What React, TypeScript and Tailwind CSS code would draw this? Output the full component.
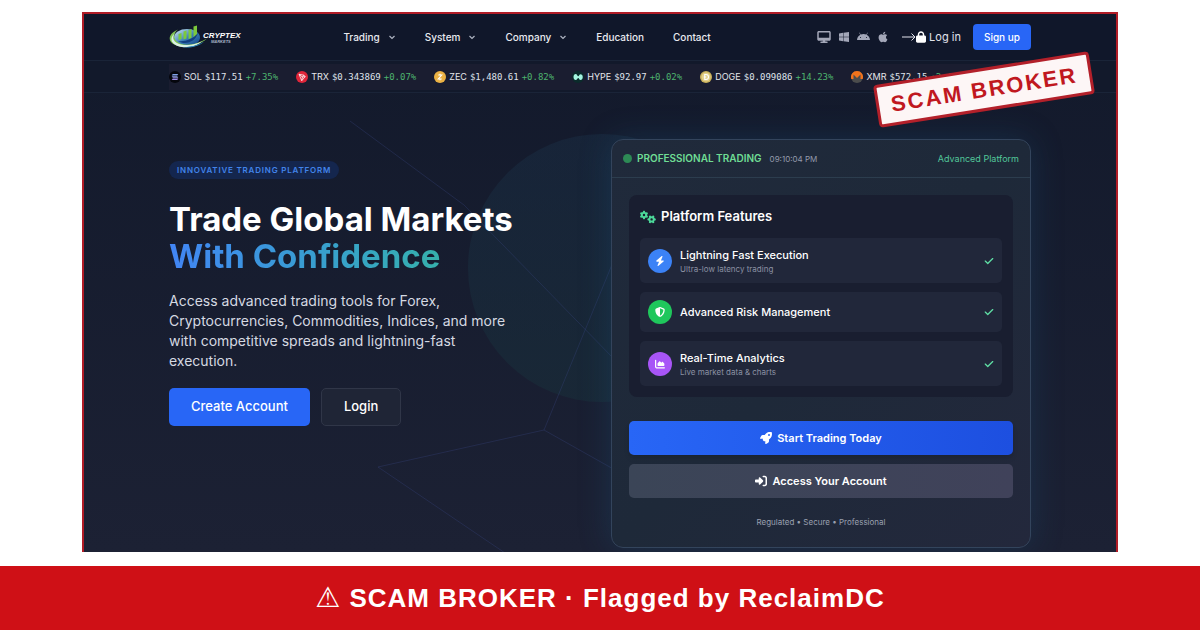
import type { ReactNode } from "react";
import {
	FaAndroid,
	FaApple,
	FaBolt,
	FaChartArea,
	FaCheck,
	FaDesktop,
	FaGears,
	FaLock,
	FaRightToBracket,
	FaRocket,
	FaShieldHalved,
	FaWindows,
} from "react-icons/fa6";

type Quote = {
	symbol: string;
	price: string;
	change: string;
	icon: ReactNode;
};

type Feature = {
	title: string;
	note?: string;
	color: string;
	icon: ReactNode;
};

const navItems = [
	{ label: "Trading", hasMenu: true },
	{ label: "System", hasMenu: true },
	{ label: "Company", hasMenu: true },
	{ label: "Education", hasMenu: false },
	{ label: "Contact", hasMenu: false },
];

const quotes: Quote[] = [
	{
		symbol: "SOL",
		price: "$117.51",
		change: "+7.35%",
		icon: (
			<>
				<circle cx="12" cy="12" r="12" fill="#05060d" />
				<path d="M7.5 6h11l-2 3H5.500z" fill="#7fa0e8" />
				<path d="M5.500 10.500h11l2 3h-11z" fill="#8f9ce6" />
				<path d="M7.500 15h11l-2 3h-11z" fill="#a08be8" />
			</>
		),
	},
	{
		symbol: "TRX",
		price: "$0.343869",
		change: "+0.07%",
		icon: (
			<>
				<circle cx="12" cy="12" r="12" fill="#e0263a" />
				<path
					d="M6 6.500l9.500 1.800 3 2.800-7 8.200zM6 6.500l6.800 5.500-1.300 7.300M12.800 12l2.700-3.700M12.800 12l5.700-.9"
					fill="none"
					stroke="#fff"
					strokeWidth="1.500"
					strokeLinejoin="round"
				/>
			</>
		),
	},
	{
		symbol: "ZEC",
		price: "$1,480.61",
		change: "+0.82%",
		icon: (
			<>
				<circle cx="12" cy="12" r="12" fill="#ecb244" />
				<path
					d="M8.500 8h7l-7 8h7M12 5.500V8M12 16v2.500"
					fill="none"
					stroke="#fff"
					strokeWidth="2.200"
				/>
			</>
		),
	},
	{
		symbol: "HYPE",
		price: "$92.97",
		change: "+0.02%",
		icon: (
			<>
				<circle cx="12" cy="12" r="12" fill="#0b2b2b" />
				<path
					d="M3 12c0-4 2-6 4.500-6S11 10.500 12.500 10.500 14.500 6.500 17 6.500s4.500 2 4.500 5.500-2 6-4.500 6-3-4-4.500-4-2.500 4-5 4S3 16 3 12z"
					fill="#a4f5e0"
				/>
			</>
		),
	},
	{
		symbol: "DOGE",
		price: "$0.099086",
		change: "+14.23%",
		icon: (
			<>
				<circle cx="12" cy="12" r="12" fill="#cbb25c" />
				<circle cx="12" cy="12" r="9" fill="#e3d08c" />
				<path
					d="M9.500 7h2.500c3.500 0 5 2 5 5s-1.500 5-5 5H9.500zM7.500 12h5"
					fill="none"
					stroke="#fff"
					strokeWidth="2.200"
				/>
			</>
		),
	},
	{
		symbol: "XMR",
		price: "$572.15",
		change: "+2.41%",
		icon: (
			<>
				<circle cx="12" cy="12" r="12" fill="#4c4c4c" />
				<path
					d="M12 0a12 12 0 0 0-11.400 15.800H5V7l7 7 7-7v8.800h4.400A12 12 0 0 0 12 0z"
					fill="#f2731c"
				/>
			</>
		),
	},
];

const features: Feature[] = [
	{
		title: "Lightning Fast Execution",
		note: "Ultra-low latency trading",
		color: "bg-[#3b82f6]",
		icon: <FaBolt />,
	},
	{
		title: "Advanced Risk Management",
		color: "bg-[#1fc75c]",
		icon: <FaShieldHalved />,
	},
	{
		title: "Real-Time Analytics",
		note: "Live market data & charts",
		color: "bg-[#a855f7]",
		icon: <FaChartArea />,
	},
];

const downloads = [
	{ label: "Desktop", icon: <FaDesktop className="h-3 w-3.5" /> },
	{ label: "Windows", icon: <FaWindows className="h-3 w-[10px]" /> },
	{ label: "Android", icon: <FaAndroid className="h-3.5 w-[13px]" /> },
	{ label: "Apple", icon: <FaApple className="h-3 w-[10px]" /> },
];

function Logo() {
	return (
		<a href="#home" aria-label="Cryptex Markets">
			<svg width="72" height="24" viewBox="0 0 72 24" overflow="visible">
				<defs>
					<linearGradient id="globe" x1="0" y1="0" x2="1" y2="1">
						<stop offset="0" stopColor="#d7ecf7" />
						<stop offset="0.5" stopColor="#3f83b8" />
						<stop offset="1" stopColor="#0d3f86" />
					</linearGradient>
				</defs>
				<ellipse cx="18" cy="12.500" rx="13" ry="8.500" fill="url(#globe)" />
				<path
					d="M9 4.500C-2 9-2 18 9 21c9 2.500 21-.5 29-7.500-8 5-18.500 7.500-25.500 5.500C4 16.500 3 9 9 4.500z"
					fill="#7fc451"
				/>
				<path
					d="M6 8c-4 5-1 10 6 11.500 8 1.500 17-.5 21-3.500-3 4-12 7-20 6C3 20.500-1 14 6 8z"
					fill="#d9f0e4"
				/>
				<path d="M13 22.300c8 1.200 17-1 22-5.500-5 3-13 5.500-22 5.500z" fill="#2f93c9" />
				<path
					d="M9.500 9l3-1v6l-3 1zM14.500 6.500l3-1v8l-3 1zM19.500 5l3-1v9l-3 1zM24.500 1.500l3.500-1V11l-3.500 1.500z"
					fill="#7cc93c"
				/>
				<path d="M9 16c7 1 15-2 20-8-2 8-12 13-20 8z" fill="#123f82" />
				<text
					x="34"
					y="13"
					fill="#fff"
					className="font-['Liberation_Sans'] text-[8px] font-bold italic"
				>
					CRYPTEX
				</text>
				<text
					x="42"
					y="18"
					fill="#aab6c8"
					className="font-['Liberation_Sans'] text-[4px] font-bold italic"
				>
					MARKETS
				</text>
			</svg>
		</a>
	);
}

function Chevron() {
	return (
		<svg
			width="8"
			height="5"
			viewBox="0 0 8 5"
			fill="none"
			stroke="#aeb4c2"
			strokeWidth="1.200"
		>
			<path d="M1.500 1L4 3.500 6.500 1" />
		</svg>
	);
}

function Header() {
	return (
		<header className="relative border-b border-[#1a2438] bg-[#10172a] px-[85px]">
			<div className="flex h-[46px] items-center justify-between">
				<Logo />
				<nav className="flex items-center gap-[29px] pt-px pr-1 text-[10px] font-medium">
					{navItems.map((item) => (
						<a
							key={item.label}
							href={`#${item.label.toLowerCase()}`}
							className="flex items-center gap-2 text-[#e8eaf0]"
						>
							{item.label}
							{item.hasMenu && <Chevron />}
						</a>
					))}
				</nav>
				<div className="flex items-center">
					<div className="flex items-center gap-2 text-[#a3a7b8]">
						{downloads.map((item) => (
							<a key={item.label} href="#download" aria-label={item.label}>
								{item.icon}
							</a>
						))}
					</div>
					<a
						href="#login"
						className="mr-3 ml-3.5 flex items-center text-[11px] text-[#e2e4ec]"
					>
						<svg
							width="14"
							height="12"
							viewBox="0 0 14 12"
							fill="none"
							stroke="currentColor"
						>
							<path d="M0 6h13M9.500 2.500L13 6l-3.500 3.500" />
						</svg>
						<FaLock className="mr-[3px] h-3 w-[10px] text-white" />
						Log in
					</a>
					<button
						type="button"
						className="h-[26px] rounded bg-[#2866f6] px-[11px] text-[10px] font-medium text-white"
					>
						Sign up
					</button>
				</div>
			</div>
		</header>
	);
}

function Ticker() {
	return (
		<div className="relative border-b border-[#1a2438] bg-[#12192b] px-[85px] pt-[3px] pb-0.5">
			<div className="flex h-[26px] items-center gap-[18px] overflow-hidden bg-[#1a1d30]">
				{quotes.map((quote) => (
					<div
						key={quote.symbol}
						className="flex shrink-0 items-center gap-[3px] font-['DejaVu_Sans_Mono',monospace] text-[9px]"
					>
						<svg width="12" height="12" viewBox="0 0 24 24">
							{quote.icon}
						</svg>
						<div className="flex items-baseline gap-[3px]">
							<span className="font-[Inter,sans-serif] text-[#e5e7eb]">
								{quote.symbol}
							</span>
							<span className="text-[#dfe2ea]">{quote.price}</span>
							<span className="text-[#4db36e]">{quote.change}</span>
						</div>
					</div>
				))}
			</div>
		</div>
	);
}

function Backdrop() {
	return (
		<svg className="absolute inset-0 size-full" fill="none">
			<defs>
				<linearGradient id="orb" x1="0" y1="0" x2="0" y2="1">
					<stop offset="0" stopColor="#1b3148" />
					<stop offset="1" stopColor="#18343d" />
				</linearGradient>
			</defs>
			<circle cx="518" cy="254" r="134" fill="url(#orb)" opacity="0.42" />
			<g stroke="#3d4888" strokeOpacity="0.3">
				<path d="M266 107l114 84 150 154" />
				<path d="M534 236l-74 180 80 45" />
				<path d="M424 541L294 453l166-37" />
			</g>
		</svg>
	);
}

function Intro() {
	return (
		<section className="flex flex-col items-start pt-[22px]">
			<span className="rounded-full bg-[#14264e] px-2 text-[8px] leading-[18px] font-semibold tracking-widest text-[#4284ea]">
				INNOVATIVE TRADING PLATFORM
			</span>
			<h1 className="mt-[22px] text-[33px] leading-[37px] font-bold text-white">
				Trade Global Markets
				<br />
				<span className="bg-gradient-to-r from-[#4285f5] to-[#36b0ac] bg-clip-text text-transparent">
					With Confidence
				</span>
			</h1>
			<p className="mt-4 max-w-[352px] text-sm leading-5 text-[#d5d9e2]">
				Access advanced trading tools for Forex, Cryptocurrencies, Commodities,
				Indices, and more with competitive spreads and lightning-fast execution.
			</p>
			<div className="mt-[17px] flex gap-[11px] text-[13px] font-medium text-white">
				<button type="button" className="h-[38px] rounded-[5px] bg-[#2866f6] px-[22px]">
					Create Account
				</button>
				<button
					type="button"
					className="h-[38px] rounded-[5px] border border-[#303648] bg-[#1f2536] px-[22px]"
				>
					Login
				</button>
			</div>
		</section>
	);
}

function PlatformCard() {
	return (
		<section className="rounded-xl border border-[#33445c] bg-gradient-to-br from-[#202a3b] via-[#1e2939] to-[#23283c] shadow-[0_0_32px_rgba(30,90,130,0.3)]">
			<div className="flex h-[38px] items-center border-b border-[#2c3d4e] px-[11px] text-[9px]">
				<span className="size-[9px] rounded-full bg-[#2d8a55]" />
				<span className="ml-[5px] text-[10px] font-semibold text-[#6fdd94]">
					PROFESSIONAL TRADING
				</span>
				<span className="ml-2 text-[8px] text-[#949bab]">09:10:04 PM</span>
				<span className="ml-auto text-[#52c79a]">Advanced Platform</span>
			</div>
			<div className="px-[17px] pt-[17px] pb-4">
				<div className="rounded-lg bg-[#191e30] px-[11px] pt-3 pb-[11px]">
					<h2 className="flex h-[19px] items-center gap-[5px] text-[13px] font-semibold text-white">
						<FaGears className="size-4 text-[#4cd99a]" />
						Platform Features
					</h2>
					<ul className="mt-3 flex flex-col gap-[9px]">
						{features.map((feature) => (
							<li
								key={feature.title}
								className="flex items-center gap-2 rounded-[5px] bg-[#21273a] p-2"
							>
								<span
									className={`flex size-6 items-center justify-center rounded-full text-[10px] text-white ${feature.color}`}
								>
									{feature.icon}
								</span>
								<div>
									<div className="text-[11px] leading-[18px] font-medium text-white">
										{feature.title}
									</div>
									{feature.note && (
										<div className="text-[8px] leading-[11px] text-[#8b91a3]">
											{feature.note}
										</div>
									)}
								</div>
								<FaCheck className="ml-auto size-[10px] text-[#5fdda4]" />
							</li>
						))}
					</ul>
				</div>
				<div className="mt-6 flex flex-col gap-[9px] text-[11px] font-semibold text-white">
					<button
						type="button"
						className="flex h-[34px] items-center justify-center gap-[5px] rounded-[5px] bg-gradient-to-r from-[#2866f6] to-[#1d4fe0] shadow-md"
					>
						<FaRocket className="size-3" />
						Start Trading Today
					</button>
					<button
						type="button"
						className="flex h-[34px] items-center justify-center gap-[5px] rounded-[5px] bg-gradient-to-r from-[#3b4557] to-[#40425a]"
					>
						<FaRightToBracket className="size-3" />
						Access Your Account
					</button>
				</div>
				<p className="mt-[18px] mb-[3px] text-center text-[8px] leading-3 text-[#9aa0b0]">
					Regulated • Secure • Professional
				</p>
			</div>
		</section>
	);
}

export default function App() {
	return (
		<main className="flex min-h-screen flex-col bg-white pt-3 font-[Inter,sans-serif]">
			<div className="relative mx-auto w-full max-w-[1036px]">
				<div className="relative overflow-hidden border-x-2 border-t-2 border-[#b01c26] bg-gradient-to-b from-[#12192b] to-[#1c2134]">
					<Backdrop />
					<Header />
					<Ticker />
					<div className="relative grid grid-cols-2 gap-[22px] px-[85px] pt-[46px] pb-1">
						<Intro />
						<PlatformCard />
					</div>
				</div>
				<div className="absolute top-14 right-[25px] -rotate-9 rounded border-3 border-[#b3202a] bg-[#fdf6f6] px-3 py-1.5 font-['Liberation_Sans',sans-serif] text-[22px] leading-[25px] font-bold tracking-[2px] text-[#c0181f]">
					SCAM BROKER
				</div>
			</div>
			<footer className="mt-auto flex h-16 items-center justify-center gap-2 bg-[#cf1016] font-['Liberation_Sans',sans-serif] text-[26px] font-bold tracking-[1px] text-white">
				<span className="font-['DejaVu_Sans',sans-serif] text-[28px] font-normal">
					⚠
				</span>
				SCAM BROKER · Flagged by ReclaimDC
			</footer>
		</main>
	);
}
